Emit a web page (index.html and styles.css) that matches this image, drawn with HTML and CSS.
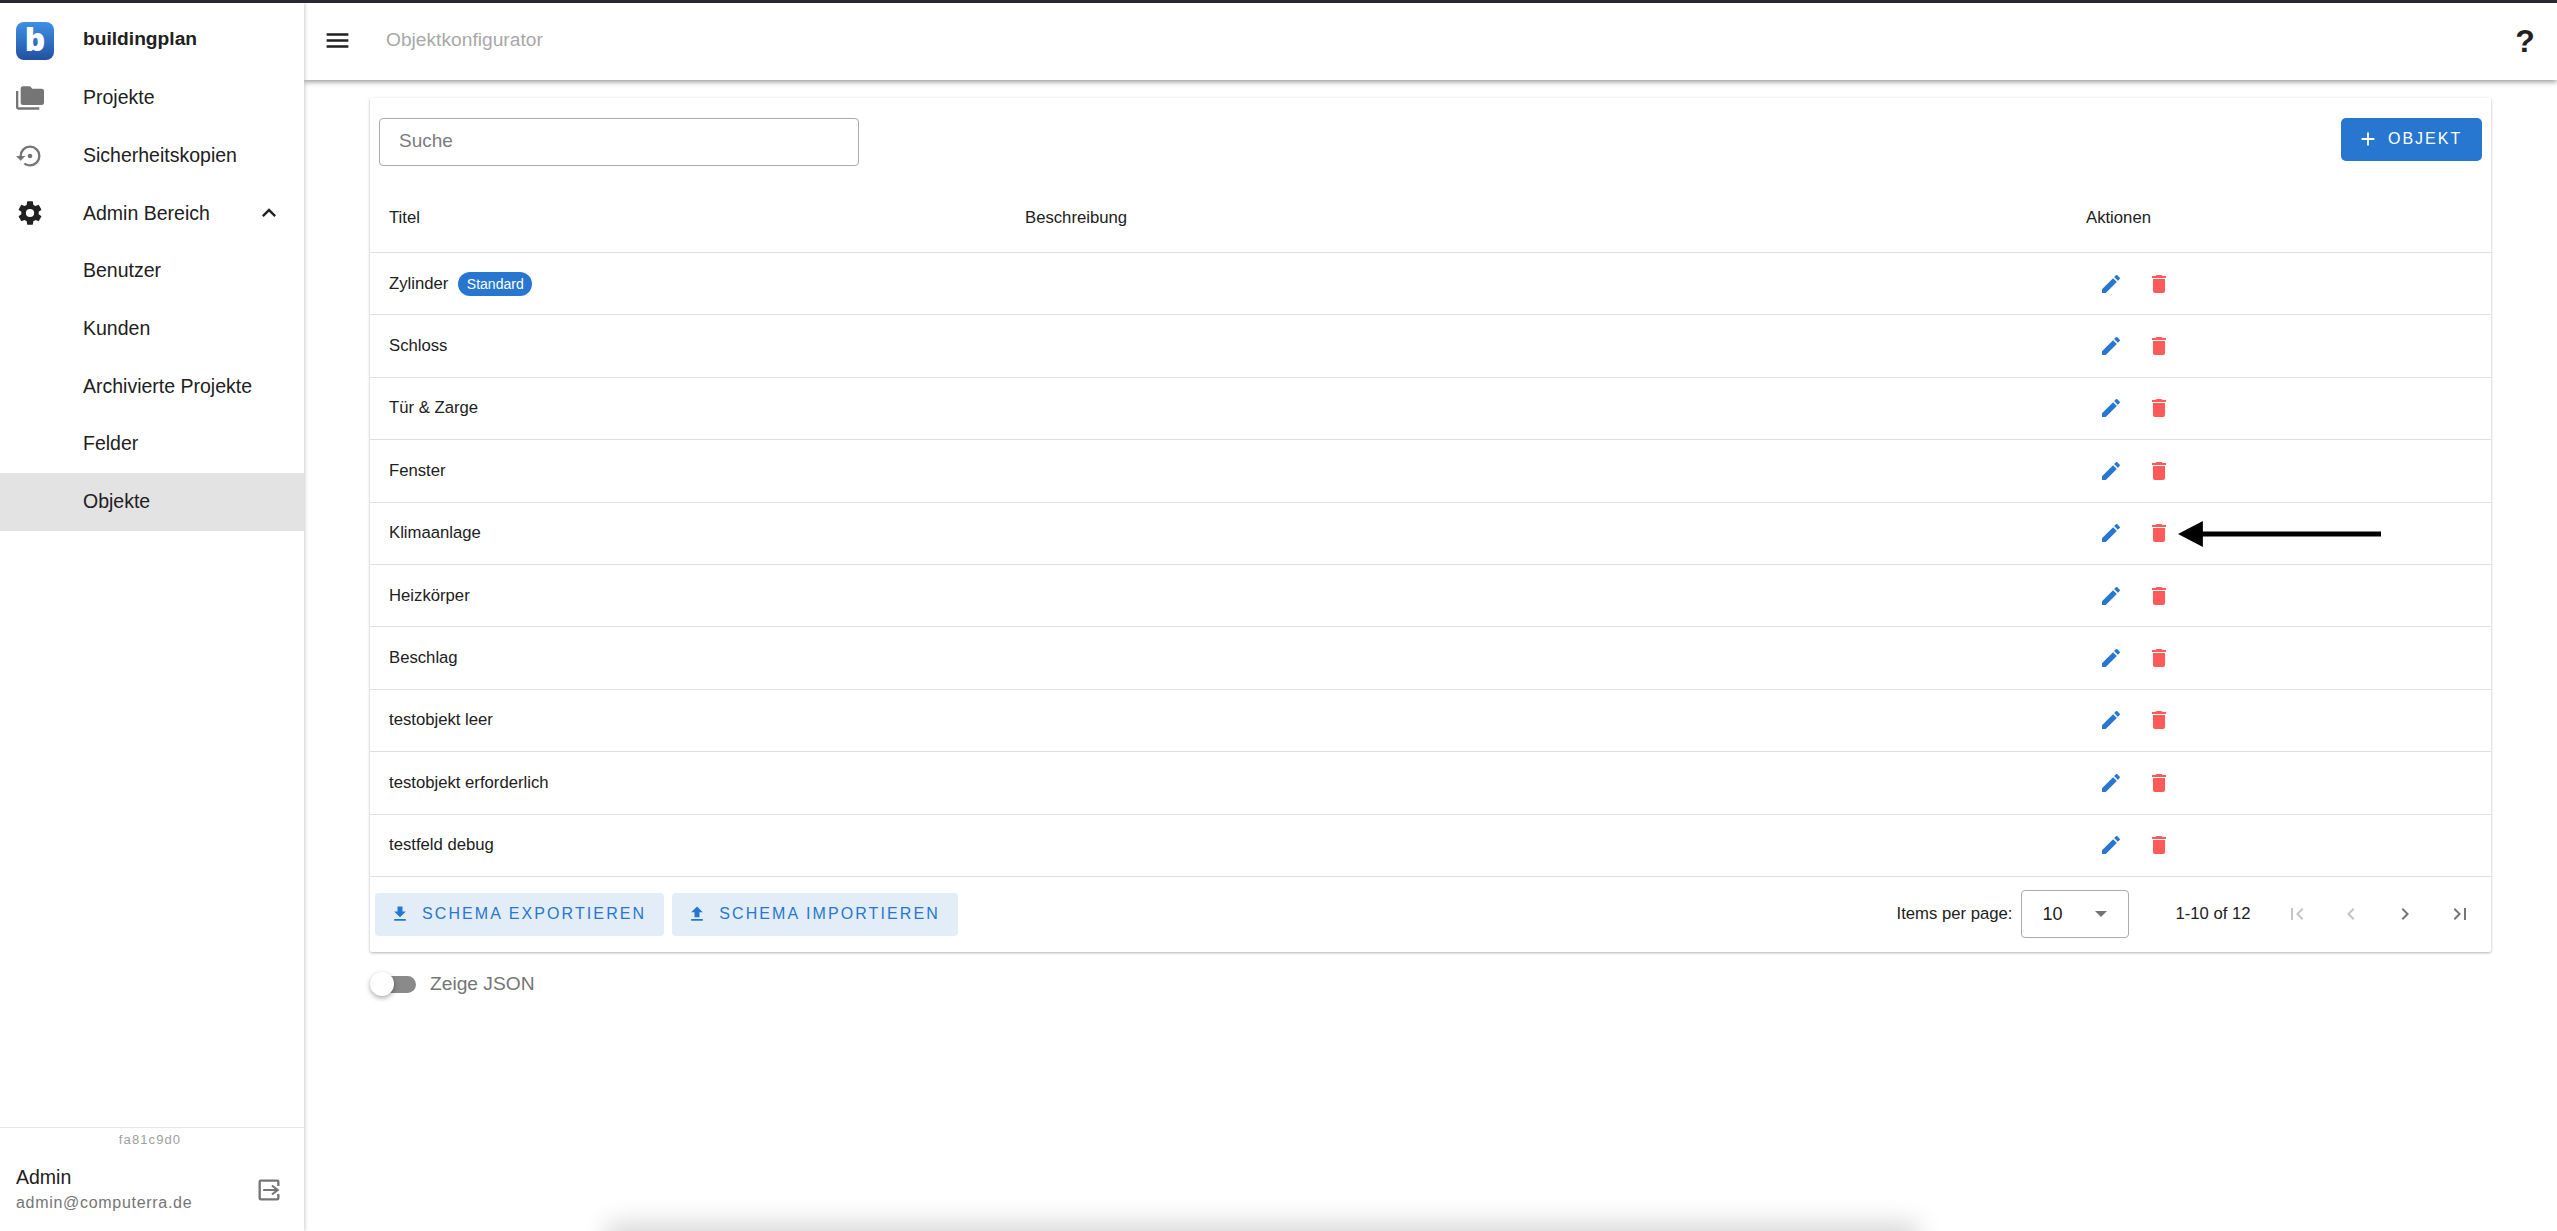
FILE: index.html
```html
<!DOCTYPE html>
<html lang="de">
<head>
<meta charset="utf-8">
<title>Objektkonfigurator</title>
<link rel="stylesheet" href="styles.css">
</head>
<body>
<svg class="sprite">
  <symbol id="pencil" viewBox="0 0 24 24"><path d="M20.71,7.04C21.1,6.65 21.1,6 20.71,5.63L18.37,3.29C18,2.9 17.35,2.9 16.96,3.29L15.12,5.12L18.87,8.87M3,17.25V21H6.75L17.81,9.93L14.06,6.18L3,17.25Z"/></symbol>
  <symbol id="trash" viewBox="0 0 24 24"><path d="M19,4H15.5L14.5,3H9.5L8.5,4H5V6H19M6,19A2,2 0 0,0 8,21H16A2,2 0 0,0 18,19V7H6V19Z"/></symbol>
</svg>
<div class="topline"></div>
<div class="app">
  <aside class="sidebar">
    <div class="brand">
      <span class="logo">b</span>
      <span class="brand-name">buildingplan</span>
    </div>
    <nav class="nav">
      <div class="nav-item"><svg class="nav-icon grey" viewBox="0 0 24 24"><path d="M22,4H14L12,2H6A2,2 0 0,0 4,4V16A2,2 0 0,0 6,18H22A2,2 0 0,0 24,16V6A2,2 0 0,0 22,4M2,6H0V11H0V20A2,2 0 0,0 2,22H20V20H2V6Z"/></svg><span>Projekte</span></div>
      <div class="nav-item"><svg class="nav-icon grey" viewBox="0 0 24 24"><path d="M12,3A9,9 0 0,0 3,12H0L4,16L8,12H5A7,7 0 0,1 12,5A7,7 0 0,1 19,12A7,7 0 0,1 12,19C10.5,19 9.09,18.5 7.94,17.7L6.5,19.14C8.04,20.3 9.94,21 12,21A9,9 0 0,0 21,12A9,9 0 0,0 12,3M14,12A2,2 0 0,0 12,10A2,2 0 0,0 10,12A2,2 0 0,0 12,14A2,2 0 0,0 14,12Z"/></svg><span>Sicherheitskopien</span></div>
      <div class="nav-item"><svg class="nav-icon dark" viewBox="0 0 24 24"><path d="M12,15.5A3.5,3.5 0 0,1 8.5,12A3.5,3.5 0 0,1 12,8.5A3.5,3.5 0 0,1 15.5,12A3.5,3.5 0 0,1 12,15.5M19.43,12.97C19.47,12.65 19.5,12.33 19.5,12C19.5,11.67 19.47,11.34 19.43,11L21.54,9.37C21.73,9.22 21.78,8.95 21.66,8.73L19.66,5.27C19.54,5.05 19.27,4.96 19.05,5.05L16.56,6.05C16.04,5.66 15.5,5.32 14.87,5.07L14.5,2.42C14.46,2.18 14.25,2 14,2H10C9.75,2 9.54,2.18 9.5,2.42L9.13,5.07C8.5,5.32 7.96,5.66 7.44,6.05L4.95,5.05C4.73,4.96 4.46,5.05 4.34,5.27L2.34,8.73C2.21,8.95 2.27,9.22 2.46,9.37L4.57,11C4.53,11.34 4.5,11.67 4.5,12C4.5,12.33 4.53,12.65 4.57,12.97L2.46,14.63C2.27,14.78 2.21,15.05 2.34,15.27L4.34,18.73C4.46,18.95 4.73,19.03 4.95,18.95L7.44,17.94C7.96,18.34 8.5,18.68 9.13,18.93L9.5,21.58C9.54,21.82 9.75,22 10,22H14C14.25,22 14.46,21.82 14.5,21.58L14.87,18.93C15.5,18.67 16.04,18.34 16.56,17.94L19.05,18.95C19.27,19.03 19.54,18.95 19.66,18.73L21.66,15.27C21.78,15.05 21.73,14.78 21.54,14.63L19.43,12.97Z"/></svg><span class="grow">Admin Bereich</span><svg class="chev dark" viewBox="0 0 24 24"><path d="M7.41,15.41L12,10.83L16.59,15.41L18,14L12,8L6,14L7.41,15.41Z"/></svg></div>
      <div class="nav-item sub">Benutzer</div>
      <div class="nav-item sub">Kunden</div>
      <div class="nav-item sub">Archivierte Projekte</div>
      <div class="nav-item sub">Felder</div>
      <div class="nav-item sub active">Objekte</div>
    </nav>
    <div class="side-foot">
      <div class="version">fa81c9d0</div>
      <div class="user">
        <div class="user-text">
          <div class="user-name">Admin</div>
          <div class="user-mail">admin@computerra.de</div>
        </div>
        <svg class="logout" viewBox="0 0 24 24"><path d="M5,3H19A2,2 0 0,1 21,5V8.5H19V5H5V19H19V15.5H21V19A2,2 0 0,1 19,21H5A2,2 0 0,1 3,19V5A2,2 0 0,1 5,3M15,7.5L21,12L15,16.500L14,15.200L16.900,12.800H7V11.200H16.900L14,8.800Z"/></svg>
      </div>
    </div>
  </aside>
  <main class="main">
    <header class="appbar">
      <svg class="menu" viewBox="0 0 24 24"><path d="M3 18h18v-2H3v2zm0-5h18v-2H3v2zm0-7v2h18V6H3z"/></svg>
      <span class="page-title">Objektkonfigurator</span>
      <span class="help">?</span>
    </header>
    <section class="card">
      <div class="toolbar">
        <div class="search">Suche</div>
        <button class="btn-add"><svg class="add-icon" viewBox="0 0 24 24"><path d="M19,13H13V19H11V13H5V11H11V5H13V11H19V13Z"/></svg>OBJEKT</button>
      </div>
      <div class="row head"><span class="c-title">Titel</span><span class="c-desc">Beschreibung</span><span class="c-act">Aktionen</span></div>
      <div class="row"><span class="c-title">Zylinder <span class="chip">Standard</span></span><span class="c-desc"></span><span class="c-act"><svg class="i edit"><use href="#pencil"/></svg><svg class="i del"><use href="#trash"/></svg></span></div>
      <div class="row"><span class="c-title">Schloss</span><span class="c-desc"></span><span class="c-act"><svg class="i edit"><use href="#pencil"/></svg><svg class="i del"><use href="#trash"/></svg></span></div>
      <div class="row"><span class="c-title">Tür &amp; Zarge</span><span class="c-desc"></span><span class="c-act"><svg class="i edit"><use href="#pencil"/></svg><svg class="i del"><use href="#trash"/></svg></span></div>
      <div class="row"><span class="c-title">Fenster</span><span class="c-desc"></span><span class="c-act"><svg class="i edit"><use href="#pencil"/></svg><svg class="i del"><use href="#trash"/></svg></span></div>
      <div class="row"><span class="c-title">Klimaanlage</span><span class="c-desc"></span><span class="c-act"><svg class="i edit"><use href="#pencil"/></svg><svg class="i del"><use href="#trash"/></svg></span><svg class="arrow" viewBox="0 0 204 28"><path d="M0,14L25,1V11.5H204V16.5H25V27Z"/></svg></div>
      <div class="row"><span class="c-title">Heizkörper</span><span class="c-desc"></span><span class="c-act"><svg class="i edit"><use href="#pencil"/></svg><svg class="i del"><use href="#trash"/></svg></span></div>
      <div class="row"><span class="c-title">Beschlag</span><span class="c-desc"></span><span class="c-act"><svg class="i edit"><use href="#pencil"/></svg><svg class="i del"><use href="#trash"/></svg></span></div>
      <div class="row"><span class="c-title">testobjekt leer</span><span class="c-desc"></span><span class="c-act"><svg class="i edit"><use href="#pencil"/></svg><svg class="i del"><use href="#trash"/></svg></span></div>
      <div class="row"><span class="c-title">testobjekt erforderlich</span><span class="c-desc"></span><span class="c-act"><svg class="i edit"><use href="#pencil"/></svg><svg class="i del"><use href="#trash"/></svg></span></div>
      <div class="row"><span class="c-title">testfeld debug</span><span class="c-desc"></span><span class="c-act"><svg class="i edit"><use href="#pencil"/></svg><svg class="i del"><use href="#trash"/></svg></span></div>
      <div class="foot">
        <button class="btn-soft"><svg class="soft-icon" viewBox="0 0 24 24"><path d="M5,20H19V18H5M19,9H15V3H9V9H5L12,16L19,9Z"/></svg>SCHEMA EXPORTIEREN</button>
        <button class="btn-soft"><svg class="soft-icon" viewBox="0 0 24 24"><path d="M9,16V10H5L12,3L19,10H15V16H9M5,20V18H19V20H5Z"/></svg>SCHEMA IMPORTIEREN</button>
        <div class="pager">
          <span class="ipp">Items per page:</span>
          <div class="select"><span>10</span><span class="caret"></span></div>
          <span class="range">1-10 of 12</span>
          <svg class="pg off" viewBox="0 0 24 24"><path d="M18.41,16.59L13.82,12L18.41,7.41L17,6L11,12L17,18L18.41,16.59M6,6H8V18H6V6Z"/></svg>
          <svg class="pg off" viewBox="0 0 24 24"><path d="M15.41,16.58L10.83,12L15.41,7.41L14,6L8,12L14,18L15.41,16.58Z"/></svg>
          <svg class="pg" viewBox="0 0 24 24"><path d="M8.59,16.58L13.17,12L8.59,7.41L10,6L16,12L10,18L8.59,16.58Z"/></svg>
          <svg class="pg" viewBox="0 0 24 24"><path d="M5.59,7.41L10.18,12L5.59,16.59L7,18L13,12L7,6L5.59,7.41M16,6H18V18H16V6Z"/></svg>
        </div>
      </div>
    </section>
    <div class="json-toggle">
      <span class="switch"><span class="knob"></span></span>
      <span class="json-label">Zeige JSON</span>
    </div>
  </main>
</div>
<div class="bottom-glow"></div>
</body>
</html>
```
FILE: styles.css
```css
* { box-sizing: border-box; }
html, body { margin: 0; height: 100%; overflow: hidden; background: #fff; }
body {
  font-family: "Liberation Sans", Arial, sans-serif;
  color: #212121;
  display: flex;
  flex-direction: column;
  position: relative;
}
svg { fill: currentColor; display: block; flex: none; }
.sprite { display: none; }
button { font-family: inherit; border: 0; cursor: pointer; }

.topline { height: 3px; background: #2b2b36; flex: none; }
.app { flex: 1; display: flex; min-height: 0; }

/* sidebar */
.sidebar {
  width: 304px;
  flex: none;
  display: flex;
  flex-direction: column;
  background: #fff;
  box-shadow: 1px 0 4px rgba(0,0,0,.2);
  z-index: 2;
}
.brand { height: 66px; display: flex; align-items: center; padding: 10px 0 0 16px; flex: none; }
.logo {
  width: 38px;
  height: 38px;
  flex: none;
  border-radius: 8px;
  background: linear-gradient(180deg, #3f8fe3 0%, #2f72c6 50%, #234f9f 100%);
  color: #fff;
  font-family: "Open Sans", "Liberation Sans", sans-serif;
  font-weight: 800;
  font-size: 32px;
  line-height: 34px;
  text-align: center;
}
.brand-name { margin: -4px 0 0 29px; font-size: 19.2px; font-weight: 700; color: #212121; }
.nav { display: flex; flex-direction: column; flex: none; }
.nav-item {
  height: 57.7px;
  display: flex;
  align-items: center;
  font-size: 19.5px;
  padding-left: 16px;
  color: #212121;
}
.nav-icon { width: 28px; height: 28px; margin-right: 39px; }
.grey { color: #757575; }
.dark { color: #212121; }
.grow { flex: 1; }
.chev { width: 28px; height: 28px; margin-right: 21px; }
.sub { padding-left: 83px; }
.active { background: #e3e3e3; }
.side-foot { margin-top: auto; border-top: 1px solid #e6e6e6; height: 104px; display: flex; flex-direction: column; }
.version { text-align: center; font-size: 13px; color: #a0a0a0; padding-top: 4px; letter-spacing: 1.1px; margin-right: 4px; }
.user { flex: 1; display: flex; align-items: center; padding: 0 21px 0 16px; }
.user-text { flex: 1; }
.user-name { font-size: 19.5px; line-height: 22px; }
.user-mail { font-size: 16px; line-height: 19px; color: #757575; margin-top: 5px; letter-spacing: .7px; }
.logout { width: 28px; height: 28px; color: #757575; margin-top: 2px; }

/* main */
.main { flex: 1; min-width: 0; display: flex; flex-direction: column; }
.appbar {
  height: 77px;
  flex: none;
  display: flex;
  align-items: center;
  padding: 0 20px 3px 19px;
  background: #fff;
  box-shadow: 0 2px 5px rgba(0,0,0,.4);
  z-index: 1;
}
.menu { width: 29px; height: 29px; color: #212121; }
.page-title { margin-left: 34px; font-size: 19.2px; color: #a8a8a8; flex: 1; }
.help { font-size: 32px; font-weight: 700; color: #212121; width: 24px; text-align: center; margin-top: 2px; }

.card {
  margin: 18px 66px 0 66px;
  background: #fff;
  box-shadow: 0 1px 3px rgba(0,0,0,.3);
  border-radius: 2px;
  position: relative;
}
.toolbar { height: 92px; display: flex; align-items: flex-start; justify-content: space-between; padding: 20px 9px 0 9px; }
.search {
  width: 480px;
  height: 48px;
  border: 1px solid #ababab;
  border-radius: 4px;
  padding-left: 19px;
  font-size: 19px;
  line-height: 44px;
  color: #7c7c7c;
}
.btn-add {
  width: 141px;
  height: 43px;
  border-radius: 5px;
  background: #2777d0;
  color: #fff;
  font-size: 16px;
  letter-spacing: 2px;
  display: flex;
  align-items: center;
  padding: 0 0 2px 16px;
}
.add-icon { width: 22px; height: 22px; margin-right: 9px; }

.row {
  height: 62.4px;
  display: flex;
  align-items: center;
  border-bottom: 1px solid #e0e0e0;
  font-size: 16.7px;
  color: #212121;
  position: relative;
  flex: none;
}
.head { height: 63px; padding-bottom: 6px; }
.c-title { width: 655px; padding-left: 19px; display: flex; align-items: center; gap: 10px; }
.c-desc { width: 1061px; }
.c-act { display: flex; align-items: center; }
.i { width: 24px; height: 24px; }
.edit { color: #2777d0; margin-left: 13px; }
.del { color: #ff5a5a; margin-left: 24px; }
.chip {
  display: inline-block;
  height: 24px;
  line-height: 24px;
  padding: 0 8.5px;
  border-radius: 12px;
  background: #2777d0;
  color: #fff;
  font-size: 14px;
}
.arrow { position: absolute; left: 1808px; top: 17px; width: 203px; height: 28px; color: #000; }

.foot { height: 75px; display: flex; align-items: center; padding: 0 19.5px 0 5px; gap: 8px; }
.btn-soft {
  height: 43px;
  border-radius: 4px;
  background: #e3edf8;
  color: #2777d0;
  font-size: 16px;
  letter-spacing: 2.1px;
  display: flex;
  align-items: center;
  padding: 0 18px 0 15px;
}
.soft-icon { width: 20px; height: 20px; margin-right: 12px; }
.pager { margin-left: auto; display: flex; align-items: center; font-size: 16.7px; }
.ipp { margin-right: 9px; }
.select {
  width: 108px;
  height: 48px;
  border: 1px solid #ababab;
  border-radius: 4px;
  display: flex;
  align-items: center;
  justify-content: space-between;
  padding: 0 21px 0 20px;
  font-size: 18px;
}
.caret { width: 0; height: 0; border-left: 6.5px solid transparent; border-right: 6.5px solid transparent; border-top: 6.5px solid #757575; }
.range { margin: 0 34px 0 46px; }
.pg { width: 24px; height: 24px; color: #757575; margin-left: 30.3px; }
.pg:first-of-type { margin-left: 0; }
.off { color: #c4c4c4; }

.json-toggle { margin: 21px 0 0 66px; display: flex; align-items: center; }
.switch { width: 46px; height: 18px; position: relative; display: block; }
.switch::before { content: ""; position: absolute; left: 4px; right: 0; top: 1px; height: 17px; border-radius: 9px; background: #8a8a8a; }
.knob { position: absolute; left: 0; top: -3px; width: 24px; height: 24px; border-radius: 50%; background: #fff; box-shadow: 0 2px 5px rgba(0,0,0,.35); }
.json-label { margin-left: 14px; font-size: 19.2px; color: #757575; }

.bottom-glow {
  position: absolute;
  left: 615px;
  bottom: -24px;
  width: 1295px;
  height: 24px;
  box-shadow: 0 0 26px 8px rgba(0,0,0,.16);
}
```
